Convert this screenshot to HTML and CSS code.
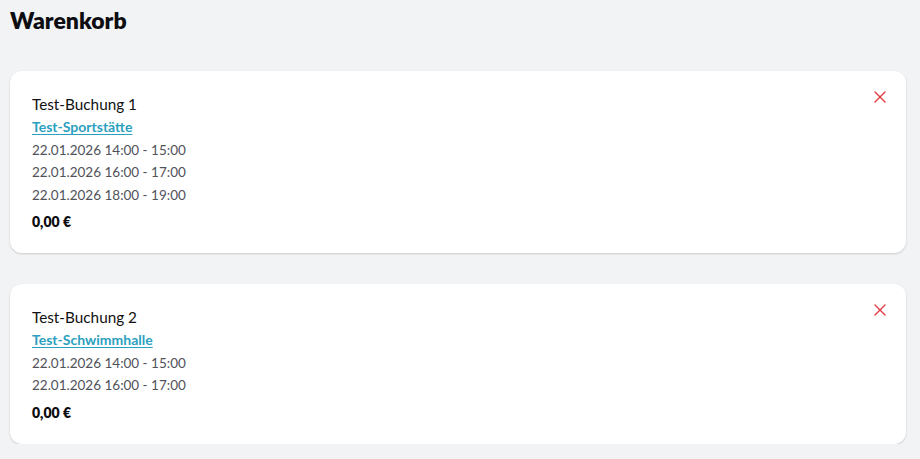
FILE: index.html
```html
<!DOCTYPE html>
<html lang="de">
<head>
<meta charset="utf-8">
<title>Warenkorb</title>
<link rel="stylesheet" href="styles.css">
</head>
<body>
<main class="page">
  <h1 class="title">Warenkorb</h1>
  <div class="cart">
    <section class="card">
      <button class="remove" aria-label="Entfernen">
        <svg viewBox="0 0 12 12" width="12" height="12"><path d="M1 1L11 11M11 1L1 11" stroke="#e0393e" stroke-width="1.4" fill="none" stroke-linecap="round"/></svg>
      </button>
      <div class="name">Test-Buchung 1</div>
      <a class="place" href="#">Test-Sportstätte</a>
      <div class="slot">22.01.2026 14:00 - 15:00</div>
      <div class="slot">22.01.2026 16:00 - 17:00</div>
      <div class="slot">22.01.2026 18:00 - 19:00</div>
      <div class="price">0,00 €</div>
    </section>
    <section class="card">
      <button class="remove" aria-label="Entfernen">
        <svg viewBox="0 0 12 12" width="12" height="12"><path d="M1 1L11 11M11 1L1 11" stroke="#e0393e" stroke-width="1.4" fill="none" stroke-linecap="round"/></svg>
      </button>
      <div class="name">Test-Buchung 2</div>
      <a class="place" href="#">Test-Schwimmhalle</a>
      <div class="slot">22.01.2026 14:00 - 15:00</div>
      <div class="slot">22.01.2026 16:00 - 17:00</div>
      <div class="price">0,00 €</div>
    </section>
  </div>
</main>
</body>
</html>
```
FILE: styles.css
```css
* { box-sizing: border-box; }
html, body {
  margin: 0;
  background: #f2f3f5;
  font-family: Lato, "Open Sans", sans-serif;
  color: #111;
}
.page {
  padding: 0 14px 0 10px;
}
.title {
  margin: 0;
  padding-top: 6px;
  font-size: 23px;
  line-height: 28px;
  font-weight: 800;
  color: #0d0d12;
}
.cart {
  display: flex;
  flex-direction: column;
  gap: 31px;
  margin-top: 37px;
}
.card {
  position: relative;
  display: flex;
  flex-direction: column;
  align-items: flex-start;
  background: #fff;
  border-radius: 12px;
  box-shadow: 0 1px 2px rgba(0,0,0,0.12), 0 1px 3px rgba(0,0,0,0.05);
  padding: 21px 22px 20px 22px;
}
.remove {
  position: absolute;
  top: 20px;
  right: 20px;
  width: 12px;
  height: 12px;
  padding: 0;
  border: 0;
  background: none;
  display: flex;
}
.name {
  font-size: 15.3px;
  line-height: 24px;
  color: #111;
}
.place {
  font-size: 14px;
  line-height: 22.5px;
  font-weight: 700;
  color: #2b9fc0;
  text-decoration: underline;
  text-underline-offset: 2px;
}
.slot {
  font-size: 13.5px;
  line-height: 22.5px;
  color: #505259;
}
.price {
  margin-top: 5px;
  font-size: 14px;
  line-height: 22px;
  font-weight: 800;
  color: #0d0d12;
}
```
